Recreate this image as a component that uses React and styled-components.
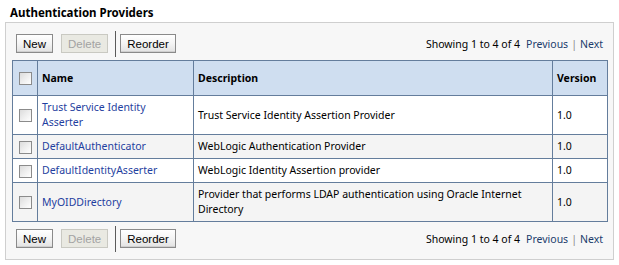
import React from "react";
import styled, { createGlobalStyle } from "styled-components";

const GlobalStyle = createGlobalStyle`
  body {
    margin: 0;
    background: #ffffff;
    font-family: "Noto Sans", Tahoma, sans-serif;
  }
`;

const Page = styled.div`
  padding: 7px 0 0 5px;
`;

const Title = styled.h2`
  margin: 0 0 3px 5px;
  font-size: 11.5px;
  font-weight: bold;
  color: #000;
  line-height: 12px;
`;

const Panel = styled.div`
  width: 595px;
  padding: 0 6px;
  border: 1px solid #cfcfcf;
  background: #f7f7f7;
`;

const Toolbar = styled.div`
  display: flex;
  align-items: center;
  height: 37px;
  padding: ${(p) => (p.bottom ? "0 0 4px 4px" : "4px 0 0 4px")};
  box-sizing: border-box;
`;

const Button = styled.button`
  height: 19px;
  padding: 0 6px;
  margin-right: 8px;
  font-family: "Liberation Sans", Arial, sans-serif;
  font-size: 11.5px;
  color: ${(p) => (p.disabled ? "#a3a3a3" : "#000")};
  border: 1px solid ${(p) => (p.disabled ? "#c9c9c2" : "#8a8a8a")};
  border-radius: 0;
  background: ${(p) =>
    p.disabled
      ? "#e9e9e2"
      : "linear-gradient(#ffffff 0%, #f4f4f4 50%, #e2e2e2 100%)"};
  box-shadow: ${(p) => (p.disabled ? "none" : "inset 0 -1px 0 #cfcfcf")};
`;

const Divider = styled.span`
  width: 1px;
  height: 26px;
  background: #5a5a5a;
  margin: 0 4px 0 -1px;
`;

const Pager = styled.div`
  margin-left: auto;
  margin-right: 4px;
  font-size: 10.5px;
  color: #000;
  white-space: nowrap;
`;

const PagerLink = styled.span`
  color: #213c6c;
  margin-left: ${(p) => (p.first ? "6px" : "0")};
`;

const PagerBar = styled.span`
  color: #8a8a8a;
  margin: 0 3px;
`;

const Table = styled.table`
  width: 595px;
  border-collapse: collapse;
  table-layout: fixed;
  font-size: 10.5px;
`;

const HeadCell = styled.th`
  height: 34px;
  background: #cfdef0;
  border: 1px solid #647d9c;
  text-align: ${(p) => (p.center ? "center" : "left")};
  padding: 0 4px;
  font-weight: bold;
  color: #000;
`;

const Row = styled.tr`
  background: ${(p) => (p.alt ? "#f4f4f4" : "#ffffff")};
`;

const Cell = styled.td`
  border: 1px solid #647d9c;
  padding: 4px 4px;
  line-height: 15px;
  height: ${(p) => p.h || 15}px;
  color: #000;
  vertical-align: middle;
  text-align: ${(p) => (p.center ? "center" : "left")};
`;

const Link = styled.span`
  color: #1f3fa0;
`;

const Check = styled.span`
  display: inline-block;
  width: 11px;
  height: 11px;
  border: 1px solid #8b8b8b;
  background: linear-gradient(135deg, #dcdcdc 0%, #f2f2f2 60%, #ffffff 100%);
  vertical-align: middle;
`;

const providers = [
  {
    name: "Trust Service Identity Asserter",
    desc: "Trust Service Identity Assertion Provider",
    h: 30,
  },
  { name: "DefaultAuthenticator", desc: "WebLogic Authentication Provider" },
  { name: "DefaultIdentityAsserter", desc: "WebLogic Identity Assertion provider" },
  {
    name: "MyOIDDirectory",
    desc: "Provider that performs LDAP authentication using Oracle Internet Directory",
    h: 30,
  },
];

const Controls = ({ bottom }) => (
  <Toolbar bottom={bottom}>
    <Button>New</Button>
    <Button disabled>Delete</Button>
    <Divider />
    <Button>Reorder</Button>
    <Pager>
      Showing 1 to 4 of 4
      <PagerLink first>Previous</PagerLink>
      <PagerBar>|</PagerBar>
      <PagerLink>Next</PagerLink>
    </Pager>
  </Toolbar>
);

export default function App() {
  return (
    <Page>
      <GlobalStyle />
      <Title>Authentication Providers</Title>
      <Panel>
        <Controls />
        <Table>
          <colgroup>
            <col style={{ width: 25 }} />
            <col style={{ width: 156 }} />
            <col style={{ width: 359 }} />
            <col style={{ width: 55 }} />
          </colgroup>
          <thead>
            <tr>
              <HeadCell center>
                <Check />
              </HeadCell>
              <HeadCell>Name</HeadCell>
              <HeadCell>Description</HeadCell>
              <HeadCell>Version</HeadCell>
            </tr>
          </thead>
          <tbody>
            {providers.map((p, i) => (
              <Row key={p.name} alt={i % 2 === 1}>
                <Cell center h={p.h}>
                  <Check />
                </Cell>
                <Cell h={p.h}>
                  <Link>{p.name}</Link>
                </Cell>
                <Cell h={p.h}>{p.desc}</Cell>
                <Cell h={p.h}>1.0</Cell>
              </Row>
            ))}
          </tbody>
        </Table>
        <Controls bottom />
      </Panel>
    </Page>
  );
}
